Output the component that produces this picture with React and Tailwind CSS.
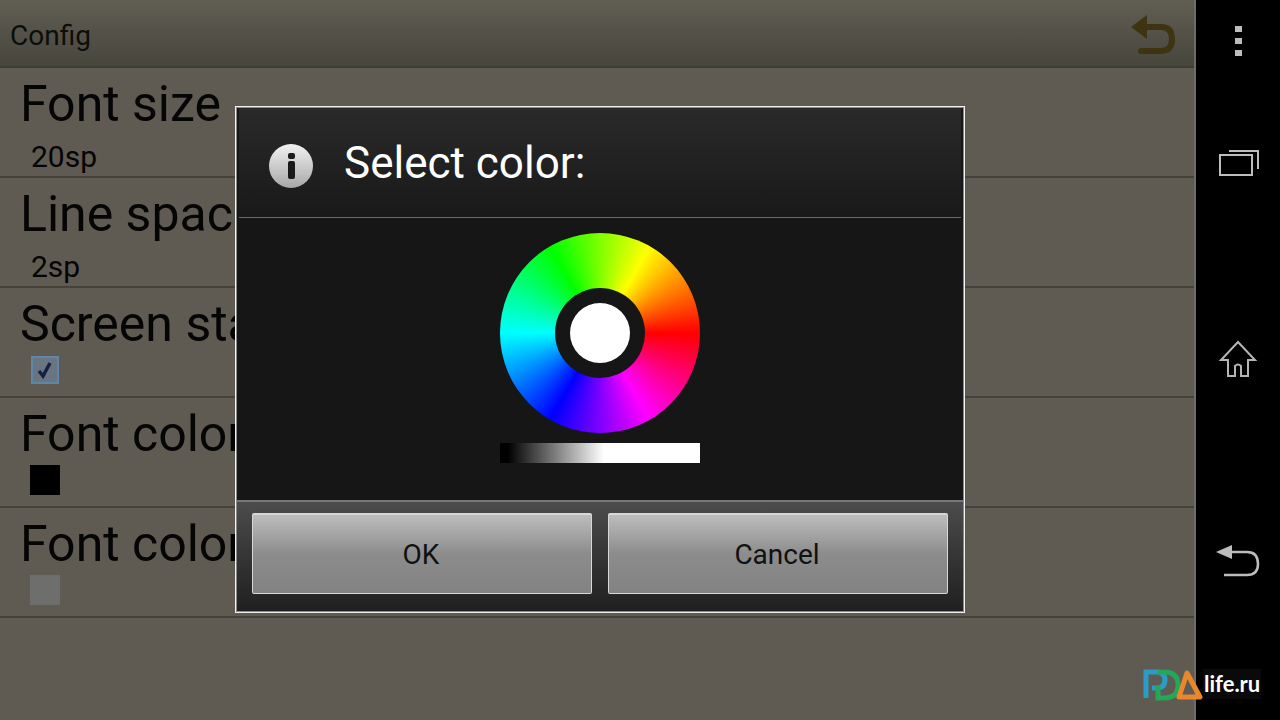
import React from "react";

function SettingRow({ title, children }) {
  return (
    <div className="h-[110px] border-b-2 border-[#45423b] pl-5 flex flex-col">
      <div className="h-[70px] text-[50px] leading-[72px] text-[#050505] whitespace-nowrap">{title}</div>
      <div className="flex-1">{children}</div>
    </div>
  );
}

function NavBar() {
  return (
    <div className="w-[84px] h-full bg-black flex flex-col items-center relative shrink-0">
      <div className="flex flex-col gap-[6px] pt-[26px]">
        <div className="w-[7px] h-[6px] bg-[#bdbdbd]" />
        <div className="w-[7px] h-[6px] bg-[#bdbdbd]" />
        <div className="w-[7px] h-[6px] bg-[#bdbdbd]" />
      </div>
      <svg className="mt-[91px]" width="44" height="32" viewBox="0 0 44 32" fill="none" stroke="#bdbdbd" strokeWidth="2">
        <rect x="4" y="8" width="32" height="20" />
        <path d="M13 4H42V22" />
      </svg>
      <svg className="mt-[160px]" width="44" height="42" viewBox="0 0 44 42" fill="none" stroke="#b5b5b5" strokeWidth="2">
        <path d="M22 3L39 21H32V37H25V27Q22 24 19 27V37H12V21H5Z" />
      </svg>
      <svg className="mt-[163px]" width="48" height="36" viewBox="0 0 48 36" fill="none">
        <path d="M2 8L18 1V15Z" fill="#bdbdbd" />
        <path d="M16 8H33Q44 8 44 20Q44 31 33 31H10" stroke="#bdbdbd" strokeWidth="2.5" />
      </svg>
    </div>
  );
}

function WatermarkLogo() {
  return (
    <div className="absolute left-[1143px] top-[666px] flex items-center">
      <svg width="62" height="36" viewBox="0 0 62 36" fill="none" strokeWidth="5">
        <path d="M3 32V6H13Q22 6 22 14Q22 22 13 22H9" stroke="#2a9cc6" />
        <path d="M15 6H21Q35 6 35 19Q35 32 21 32H15V20" stroke="#25a658" />
        <path d="M36 31L44 7L57 31Z" stroke="#e8872b" strokeLinejoin="round" />
      </svg>
      <div className="bg-[#0a0a0a] text-white text-[22px] leading-[30px] px-px -ml-[2px] font-['Lato',sans-serif] font-bold">life.ru</div>
    </div>
  );
}

function ColorDialog() {
  return (
    <div className="absolute left-[235px] top-[106px] w-[730px] h-[507px] border border-[#f0f0f0] p-px bg-[#8a8a8a]">
      <div className="h-full bg-[#161616] flex flex-col">
        <div className="h-[110px] mx-[2px] border-b border-[#666] bg-gradient-to-b from-[#2a2a2a] to-[#191919] flex items-center pl-[30px]">
          <div className="mt-[6px] w-11 h-11 rounded-full bg-gradient-to-b from-[#f2f2f2] to-[#a8a8a8] flex flex-col items-center justify-center gap-[2px]">
            <div className="w-[7px] h-[6px] rounded-[2px] bg-[#1a1a1a]" />
            <div className="w-[7px] h-[18px] rounded-[2px] bg-[#1a1a1a]" />
          </div>
          <div className="ml-[31px] text-[44px] leading-none text-white">Select color:</div>
        </div>
        <div className="h-[282px] flex flex-col items-center pt-[15px]">
          <div className="w-[200px] h-[200px] rounded-full bg-[conic-gradient(from_90deg,#f00,#f0f,#00f,#0ff,#0f0,#ff0,#f00)] flex items-center justify-center">
            <div className="w-[90px] h-[90px] rounded-full bg-[#161616] flex items-center justify-center">
              <div className="w-[60px] h-[60px] rounded-full bg-white" />
            </div>
          </div>
          <div className="w-[200px] h-[20px] mt-[10px] bg-[linear-gradient(to_right,#000_0%,#000_4%,#fff_52%,#fff_100%)]" />
        </div>
        <div className="flex-1 border-t-2 border-[#777] bg-gradient-to-b from-[#4c4c4c] to-[#202020] flex gap-4 px-[15px] pt-[11px]">
          <button className="w-[340px] h-[81px] rounded-[2px] border-t-2 border-l border-r border-b border-[#d8d8d8] bg-[linear-gradient(to_bottom,#bdbdbd_0%,#8c8c8c_50%,#828282_100%)] text-[28px] text-[#111] pr-[2px] pt-[2px]">OK</button>
          <button className="w-[340px] h-[81px] rounded-[2px] border-t-2 border-l border-r border-b border-[#d8d8d8] bg-[linear-gradient(to_bottom,#bdbdbd_0%,#8c8c8c_50%,#828282_100%)] text-[28px] text-[#111] pr-[2px] pt-[2px]">Cancel</button>
        </div>
      </div>
    </div>
  );
}

export default function App() {
  return (
    <div className="relative w-[1280px] h-[720px] overflow-hidden flex bg-[#5f5a52] font-['Roboto',sans-serif]">
      <div className="w-[1196px] h-full border-r-2 border-[#6f6c65]">
        {/* Action bar */}
        <div className="h-[68px] border-b-2 border-[#3f3d35] bg-gradient-to-b from-[#615e54] to-[#47463c] flex items-center justify-between pl-[10px] pr-[18px]">
          <span className="pt-[5px] text-[28px] text-[#0d0d0a]">Config</span>
          <svg className="mt-[4px]" width="46" height="42" viewBox="0 0 46 42" fill="none">
            <path d="M1 13L17 1V25Z" fill="#3e3412" />
            <path d="M14 13H31Q42 13 42 25Q42 37 31 37H11" stroke="#3e3412" strokeWidth="6" strokeLinecap="round" />
          </svg>
        </div>

        <SettingRow title="Font size">
          <div className="pl-[11px] pt-px text-[30px] leading-[36px] text-[#050505]">20sp</div>
        </SettingRow>
        <SettingRow title="Line spacing">
          <div className="pl-[11px] pt-px text-[30px] leading-[36px] text-[#050505]">2sp</div>
        </SettingRow>
        <SettingRow title="Screen stay on">
          <div className="ml-[11px] -mt-[2px] w-7 h-7 border-2 border-[#5f86a6] bg-[#687684] flex items-center justify-center">
            <svg width="18" height="18" viewBox="0 0 18 18" fill="none" stroke="#16213f" strokeWidth="3.5">
              <path d="M3 10L7 15L14 2" />
            </svg>
          </div>
        </SettingRow>
        <SettingRow title="Font color">
          <div className="ml-[10px] -mt-[3px] w-[30px] h-[30px] bg-black" />
        </SettingRow>
        <SettingRow title="Font color">
          <div className="ml-[10px] -mt-[3px] w-[30px] h-[30px] bg-[#6e6e6c]" />
        </SettingRow>
      </div>

      <NavBar />
      <ColorDialog />
      <WatermarkLogo />
    </div>
  );
}
